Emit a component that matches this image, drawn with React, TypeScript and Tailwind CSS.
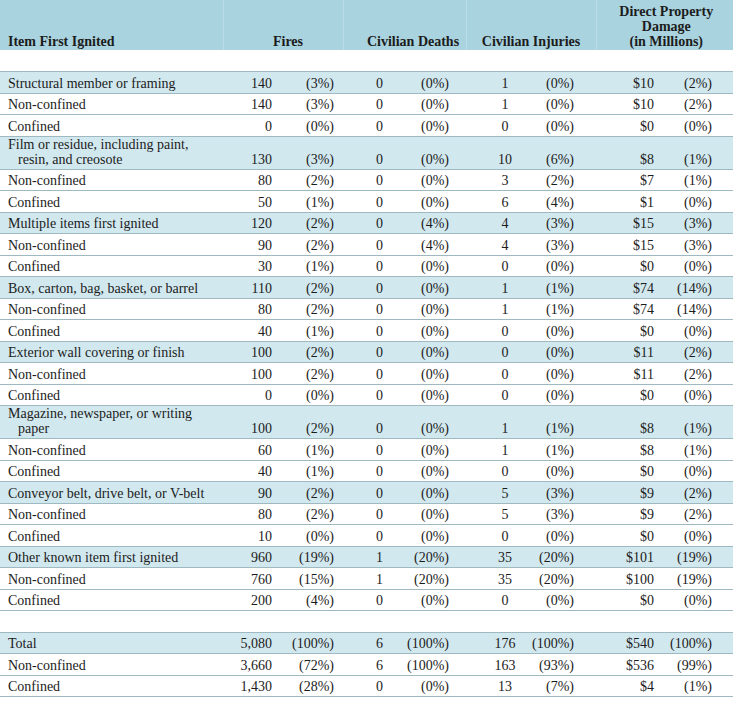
import React from "react";

type Vals = [string, string, string, string, string, string, string, string];

interface Row {
  label: string[];
  vals: Vals;
  main?: boolean;
}

const groups: Row[][] = [
  [
    { label: ["Structural member or framing"], vals: ["140", "(3%)", "0", "(0%)", "1", "(0%)", "$10", "(2%)"], main: true },
    { label: ["Non-confined"], vals: ["140", "(3%)", "0", "(0%)", "1", "(0%)", "$10", "(2%)"] },
    { label: ["Confined"], vals: ["0", "(0%)", "0", "(0%)", "0", "(0%)", "$0", "(0%)"] },
  ],
  [
    { label: ["Film or residue, including paint,", "resin, and creosote"], vals: ["130", "(3%)", "0", "(0%)", "10", "(6%)", "$8", "(1%)"], main: true },
    { label: ["Non-confined"], vals: ["80", "(2%)", "0", "(0%)", "3", "(2%)", "$7", "(1%)"] },
    { label: ["Confined"], vals: ["50", "(1%)", "0", "(0%)", "6", "(4%)", "$1", "(0%)"] },
  ],
  [
    { label: ["Multiple items first ignited"], vals: ["120", "(2%)", "0", "(4%)", "4", "(3%)", "$15", "(3%)"], main: true },
    { label: ["Non-confined"], vals: ["90", "(2%)", "0", "(4%)", "4", "(3%)", "$15", "(3%)"] },
    { label: ["Confined"], vals: ["30", "(1%)", "0", "(0%)", "0", "(0%)", "$0", "(0%)"] },
  ],
  [
    { label: ["Box, carton, bag, basket, or barrel"], vals: ["110", "(2%)", "0", "(0%)", "1", "(1%)", "$74", "(14%)"], main: true },
    { label: ["Non-confined"], vals: ["80", "(2%)", "0", "(0%)", "1", "(1%)", "$74", "(14%)"] },
    { label: ["Confined"], vals: ["40", "(1%)", "0", "(0%)", "0", "(0%)", "$0", "(0%)"] },
  ],
  [
    { label: ["Exterior wall covering or finish"], vals: ["100", "(2%)", "0", "(0%)", "0", "(0%)", "$11", "(2%)"], main: true },
    { label: ["Non-confined"], vals: ["100", "(2%)", "0", "(0%)", "0", "(0%)", "$11", "(2%)"] },
    { label: ["Confined"], vals: ["0", "(0%)", "0", "(0%)", "0", "(0%)", "$0", "(0%)"] },
  ],
  [
    { label: ["Magazine, newspaper, or writing", "paper"], vals: ["100", "(2%)", "0", "(0%)", "1", "(1%)", "$8", "(1%)"], main: true },
    { label: ["Non-confined"], vals: ["60", "(1%)", "0", "(0%)", "1", "(1%)", "$8", "(1%)"] },
    { label: ["Confined"], vals: ["40", "(1%)", "0", "(0%)", "0", "(0%)", "$0", "(0%)"] },
  ],
  [
    { label: ["Conveyor belt, drive belt, or V-belt"], vals: ["90", "(2%)", "0", "(0%)", "5", "(3%)", "$9", "(2%)"], main: true },
    { label: ["Non-confined"], vals: ["80", "(2%)", "0", "(0%)", "5", "(3%)", "$9", "(2%)"] },
    { label: ["Confined"], vals: ["10", "(0%)", "0", "(0%)", "0", "(0%)", "$0", "(0%)"] },
  ],
  [
    { label: ["Other known item first ignited"], vals: ["960", "(19%)", "1", "(20%)", "35", "(20%)", "$101", "(19%)"], main: true },
    { label: ["Non-confined"], vals: ["760", "(15%)", "1", "(20%)", "35", "(20%)", "$100", "(19%)"] },
    { label: ["Confined"], vals: ["200", "(4%)", "0", "(0%)", "0", "(0%)", "$0", "(0%)"] },
  ],
];

const totals: Row[] = [
  { label: ["Total"], vals: ["5,080", "(100%)", "6", "(100%)", "176", "(100%)", "$540", "(100%)"], main: true },
  { label: ["Non-confined"], vals: ["3,660", "(72%)", "6", "(100%)", "163", "(93%)", "$536", "(99%)"] },
  { label: ["Confined"], vals: ["1,430", "(28%)", "0", "(0%)", "13", "(7%)", "$4", "(1%)"] },
];

// alignment + padding of each value column
const cellCls = [
  "text-right pr-[8px]",
  "text-right pr-[9px]",
  "text-right pr-[9px]",
  "text-right pr-[17px]",
  "text-center pl-[21px]",
  "text-right pr-[22px]",
  "text-right pr-[8px]",
  "text-right pr-[21px]",
];

const DataRow = ({ row }: { row: Row }) => {
  const tall = row.label.length > 1;
  return (
    <tr className={`${tall ? "h-[32.5px]" : "h-[21.5px]"} ${row.main ? "bg-[#d2e8ef]" : "bg-white"} border-b border-[#9fb9c2]`}>
      <td className="align-bottom pl-[8px] pb-[2px]">
        {row.label.map((l, i) => (
          <div key={i} className={i > 0 ? "pl-[10px]" : ""}>
            {l}
          </div>
        ))}
      </td>
      {row.vals.map((v, i) => (
        <td key={i} className={`align-bottom pb-[2px] ${cellCls[i]}`}>
          {v}
        </td>
      ))}
    </tr>
  );
};

const Gap = () => (
  <tr className="h-[21.5px] bg-white border-b border-[#9fb9c2]">
    <td colSpan={9}></td>
  </tr>
);

export default function App() {
  return (
    <div className="w-[733px] h-[702px] bg-white overflow-hidden">
      <table
        className="w-[733px] table-fixed border-collapse text-[14px] leading-[15px] text-[#1c1c1c]"
        style={{ fontFamily: '"Liberation Serif", "Times New Roman", serif' }}
      >
        <colgroup>
          <col className="w-[223px]" />
          <col className="w-[57px]" />
          <col className="w-[63px]" />
          <col className="w-[49px]" />
          <col className="w-[74px]" />
          <col className="w-[57px]" />
          <col className="w-[73px]" />
          <col className="w-[66px]" />
          <col className="w-[71px]" />
        </colgroup>
        <thead>
          <tr className="h-[50px] bg-[#a9d3df] font-bold">
            <th className="align-bottom text-left pl-[8px] pb-[1px] font-bold">Item First Ignited</th>
            <th colSpan={2} className="align-bottom text-center pl-[10px] pb-[1px] border-l border-[#bcdde7] font-bold">
              Fires
            </th>
            <th colSpan={2} className="align-bottom text-center pl-[17px] pb-[1px] border-l border-[#bcdde7] font-bold">
              Civilian Deaths
            </th>
            <th colSpan={2} className="align-bottom text-center pb-[1px] border-l border-[#bcdde7] font-bold">
              Civilian Injuries
            </th>
            <th colSpan={2} className="align-bottom text-center pl-[3px] pb-[1px] border-l border-[#bcdde7] font-bold">
              Direct Property
              <br />
              Damage
              <br />
              (in Millions)
            </th>
          </tr>
        </thead>
        <tbody>
          <Gap />
          {groups.map((g) => g.map((r, i) => <DataRow key={r.label[0] + i} row={r} />))}
          <Gap />
          {totals.map((r, i) => (
            <DataRow key={"t" + i} row={r} />
          ))}
        </tbody>
      </table>
    </div>
  );
}
